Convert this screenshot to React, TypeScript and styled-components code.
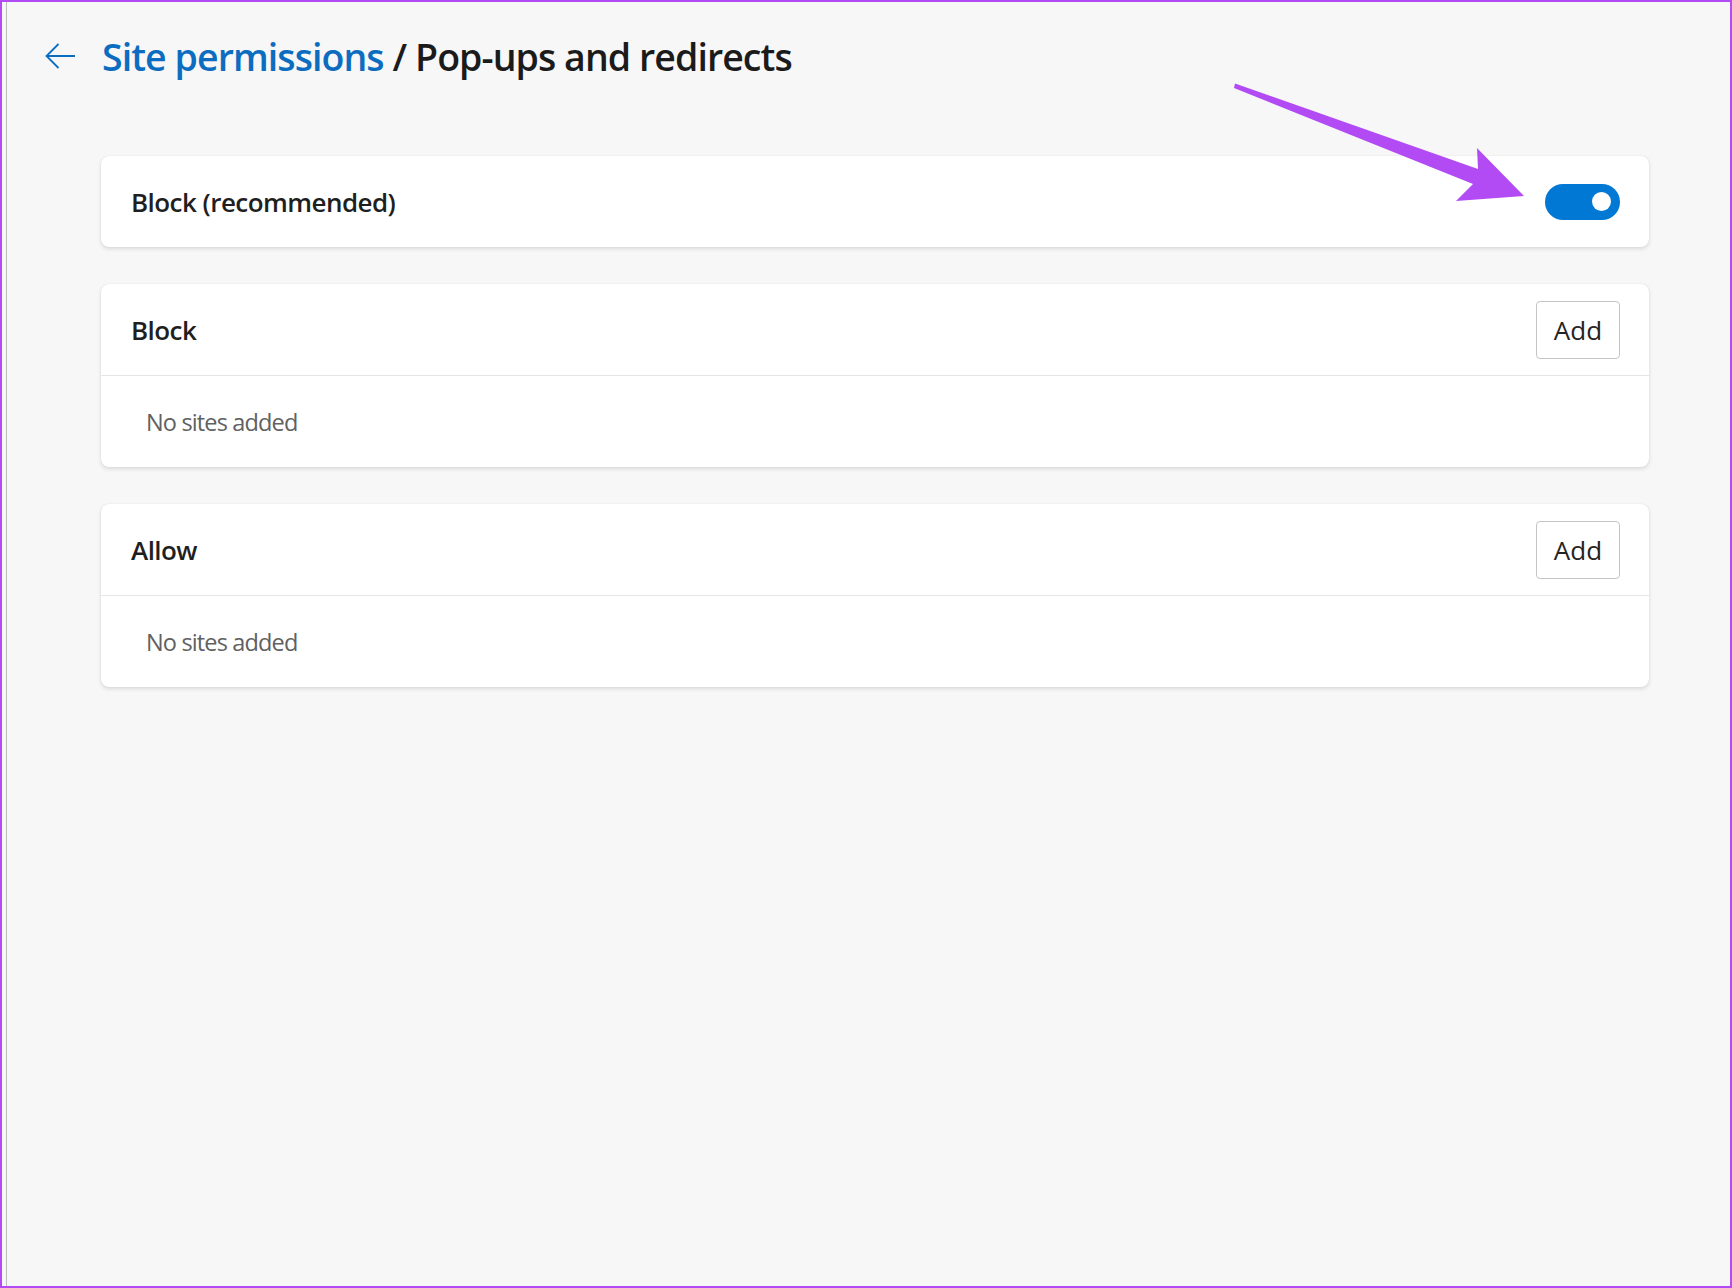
import React from "react";
import styled, { createGlobalStyle } from "styled-components";

const GlobalStyle = createGlobalStyle`
  html, body { margin: 0; padding: 0; }
  body { background: #f7f7f7; font-family: "Open Sans", "Noto Sans", sans-serif; }
  * { box-sizing: border-box; }
`;

const Frame = styled.div`
  position: relative;
  width: 1732px;
  height: 1288px;
  border: 2px solid #b24bf3;
  padding-left: 4px;
  background: #f7f7f7;
  overflow: hidden;
`;

const Window = styled.div`
  height: 100%;
  border-left: 1px solid #bcbcbc;
  display: flex;
  flex-direction: column;
  padding: 29px 81px 0 38px;
`;

const Header = styled.div`
  display: flex;
  align-items: center;
  gap: 27px;
  height: 52px;
`;

const BackButton = styled.button`
  display: flex;
  align-items: center;
  justify-content: center;
  background: none;
  border: none;
  padding: 0;
  width: 30px;
  height: 26px;
  margin-top: -2px;
  cursor: pointer;
`;

const Title = styled.h1`
  margin: 0;
  font-size: 37.5px;
  line-height: 52px;
  font-weight: 600;
  letter-spacing: -0.93px;
  color: #1b1b1b;
  white-space: nowrap;
`;

const Crumb = styled.a`
  color: #0c6dc0;
  text-decoration: none;
`;

const CardList = styled.div`
  display: flex;
  flex-direction: column;
  gap: 37px;
  margin-top: 73px;
  margin-left: 56px;
`;

const Card = styled.section`
  background: #ffffff;
  border-radius: 8px;
  box-shadow: 0 2px 4px rgba(0, 0, 0, 0.12), 0 0 1px rgba(0, 0, 0, 0.12);
`;

const Row = styled.div<{ $divider?: boolean }>`
  display: flex;
  align-items: center;
  justify-content: space-between;
  height: ${(p) => (p.$divider ? "92px" : "91px")};
  padding: 0 29px 0 30px;
  border-bottom: ${(p) => (p.$divider ? "1px solid #e6e6e6" : "none")};
`;

const RowTitle = styled.span`
  font-size: 26px;
  font-weight: 600;
  letter-spacing: -0.55px;
  color: #1f1f1f;
`;

const Body = styled.div`
  display: flex;
  align-items: center;
  height: 91px;
  padding: 0 45px;
`;

const Empty = styled.span`
  font-size: 23.5px;
  letter-spacing: -0.85px;
  color: #616161;
`;

const AddButton = styled.button`
  width: 84px;
  height: 58px;
  border: 1px solid #c4c4c4;
  border-radius: 4px;
  background: #ffffff;
  font-family: inherit;
  font-size: 26px;
  color: #242424;
  padding: 0;
  cursor: pointer;
`;

const Toggle = styled.button<{ $on: boolean }>`
  display: flex;
  align-items: center;
  justify-content: ${(p) => (p.$on ? "flex-end" : "flex-start")};
  width: 75px;
  height: 36px;
  border-radius: 18px;
  border: none;
  padding: 0 9px;
  background: ${(p) => (p.$on ? "#0078d4" : "#ffffff")};
  cursor: pointer;
`;

const Knob = styled.span`
  width: 19px;
  height: 19px;
  border-radius: 50%;
  background: #ffffff;
`;

const Annotation = styled.svg`
  position: absolute;
  left: 0;
  top: 0;
  pointer-events: none;
`;

function ListCard({ title }: { title: string }) {
  return (
    <Card>
      <Row $divider>
        <RowTitle>{title}</RowTitle>
        <AddButton>Add</AddButton>
      </Row>
      <Body>
        <Empty>No sites added</Empty>
      </Body>
    </Card>
  );
}

export default function App() {
  return (
    <>
      <GlobalStyle />
      <Frame>
        <Window>
          <Header>
            <BackButton aria-label="Back">
              <svg width="30" height="26" viewBox="0 0 30 26" fill="none">
                <path d="M30 13H1.5M13.5 1L1.5 13L13.5 25" stroke="#0c6dc0" strokeWidth="1.8" />
              </svg>
            </BackButton>
            <Title>
              <Crumb href="#">Site permissions</Crumb> / Pop-ups and redirects
            </Title>
          </Header>
          <CardList>
            <Card>
              <Row>
                <RowTitle>Block (recommended)</RowTitle>
                <Toggle $on aria-label="Block (recommended)">
                  <Knob />
                </Toggle>
              </Row>
            </Card>
            <ListCard title="Block" />
            <ListCard title="Allow" />
          </CardList>
        </Window>
        <Annotation width="1732" height="1288" viewBox="0 0 1732 1288">
          <polygon
            points="1233,81.5 1476,167 1475,146 1522,194 1454,199 1471,182 1232,86"
            fill="#b24bf3"
          />
        </Annotation>
      </Frame>
    </>
  );
}
